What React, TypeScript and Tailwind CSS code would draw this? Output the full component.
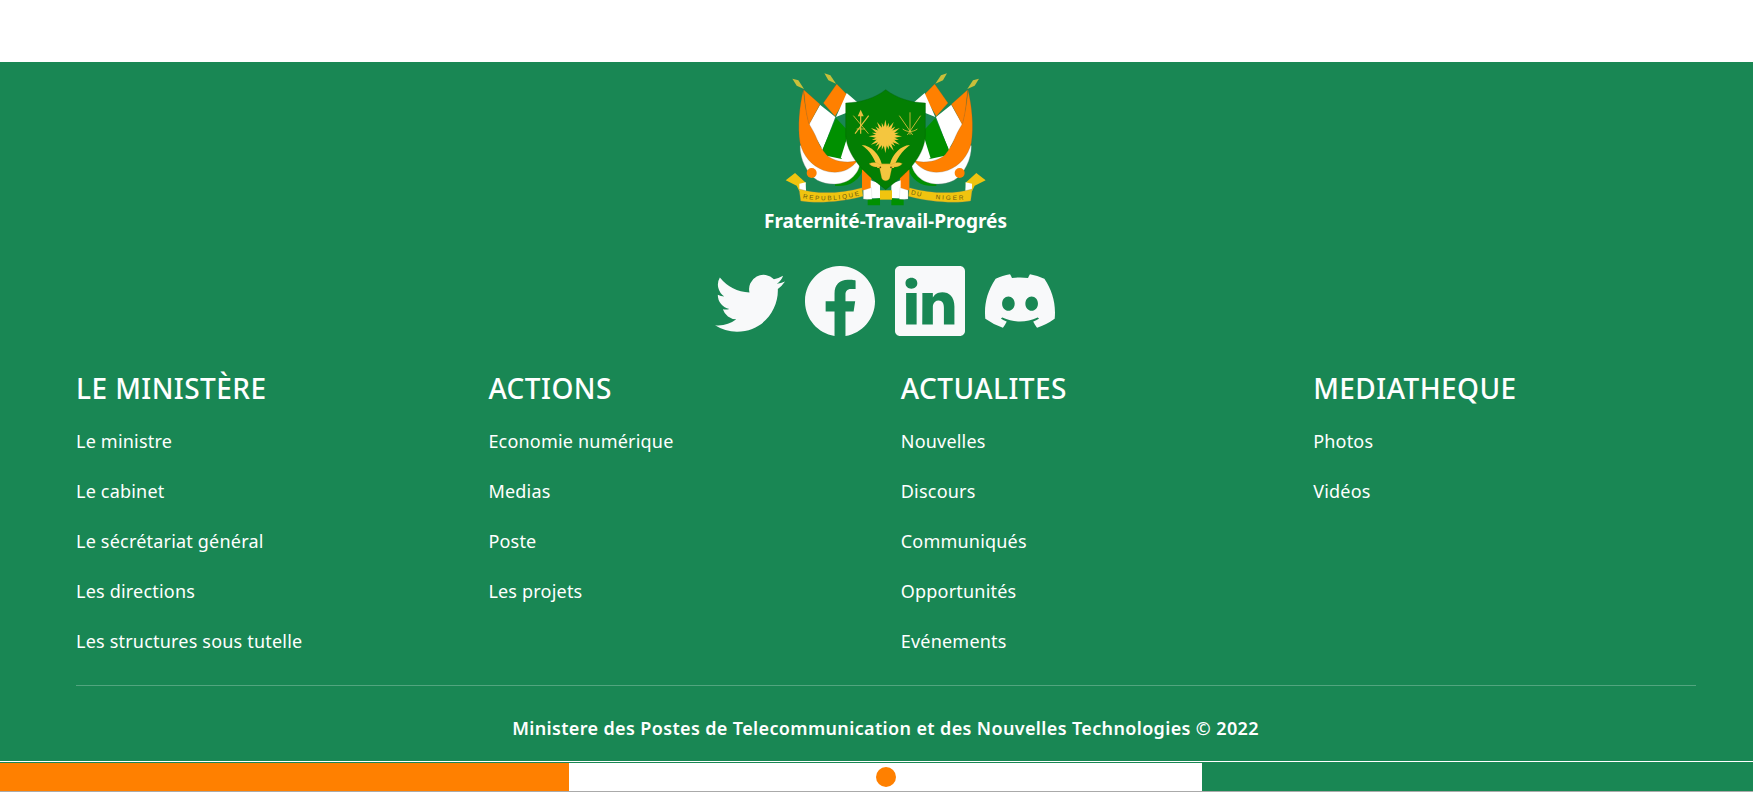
import { BsTwitter, BsFacebook, BsLinkedin, BsDiscord } from "react-icons/bs";

const columns = [
  { title: "LE MINISTÈRE", links: ["Le ministre", "Le cabinet", "Le sécrétariat général", "Les directions", "Les structures sous tutelle"] },
  { title: "ACTIONS", links: ["Economie numérique", "Medias", "Poste", "Les projets"] },
  { title: "ACTUALITES", links: ["Nouvelles", "Discours", "Communiqués", "Opportunités", "Evénements"] },
  { title: "MEDIATHEQUE", links: ["Photos", "Vidéos"] },
];

const rays = Array.from({ length: 24 }, (_, i) => {
  const a = (i / 24) * Math.PI * 2;
  const r = i % 2 === 0 ? 50 : 42;
  const b = a + Math.PI / 2;
  const cx = 436, cy = 230;
  return `${cx + 10 * Math.cos(b)},${cy + 10 * Math.sin(b)} ${cx + r * Math.cos(a)},${cy + r * Math.sin(a)} ${cx - 10 * Math.cos(b)},${cy - 10 * Math.sin(b)}`;
});

function FlagSide() {
  return (
    <g>
      <polygon points="157,57 175,62 192,88 170,78" fill="#c9bf3a" />
      <polygon points="253,41 271,47 288,72 265,62" fill="#c9bf3a" />
      <path d="M285,379 C330,382 360,362 370,325 L358,300 C350,340 320,365 285,372 Z" fill="#009000" />
      <path d="M180,258 C180,300 200,340 232,362 C262,378 310,378 335,355 C350,342 360,325 360,306 L350,295 L200,250 Z" fill="#fff" stroke="#8a8a8a" strokeWidth="1" />
      <polygon points="240,135 286,172 248,270 205,197" fill="#fff" />
      <polygon points="290,73 323,107 285,170 250,130" fill="#ff8000" stroke="#8a5a20" strokeWidth="0.6" />
      <polygon points="320,100 352,128 318,130 318,160 288,172" fill="#fff" />
      <polygon points="288,175 325,215 305,298 245,285 248,268" fill="#009000" />
      <polygon points="322,232 342,296 302,296" fill="#fff" />
      <polygon points="191,90 240,134 206,197 198,160" fill="#ff8000" stroke="#8a5a20" strokeWidth="0.6" />
      <path d="M190,90 C178,140 172,200 180,250 C190,290 215,318 250,332 C285,344 325,340 353,302 C335,308 320,308 300,305 C280,300 262,292 255,280 C240,262 232,240 225,225 C215,205 208,195 206,190 C198,160 193,125 190,90 Z" fill="#ff8000" stroke="#6a5a40" strokeWidth="0.7" />
      <circle cx="215" cy="340" r="15" fill="#ff8000" />
      <polygon points="366,330 394,330 394,392 366,392" fill="#ff8000" />
      <polygon points="392,362 420,372 420,416 392,416" fill="#fff" />
      <polygon points="370,392 394,384 396,420 370,418" fill="#fff" stroke="#aaa" strokeWidth="0.6" />
      <polygon points="383,420 420,416 420,437 383,437" fill="#009000" />
      <polygon points="137,362 165,340 198,370 178,395 170,378" fill="#f0c40f" />
      <polygon points="178,372 197,368 198,395 178,394" fill="#fff" />
      <path d="M177,388 C230,404 300,402 366,384 L369,410 C300,428 230,432 182,424 Z" fill="#f0c40f" stroke="#777" strokeWidth="0.8" />
    </g>
  );
}

function Emblem() {
  return (
    <svg viewBox="135 40 605 400" width="201.7" height="133.3" className="block">
      <defs>
        <path id="rib-l" d="M188,416 C240,426 300,424 362,406" />
        <path id="rib-r" d="M512,404 C570,418 630,426 690,418" />
      </defs>
      <FlagSide />
      <g transform="translate(874,0) scale(-1,1)">
        <FlagSide />
      </g>
      <rect x="420" y="392" width="36" height="28" fill="#f0c40f" />
      <path d="M437,90 C470,115 510,128 556,130 L556,230 C550,300 490,350 437,390 C385,350 325,300 317,230 L317,130 C365,128 405,115 437,90 Z" fill="#037f03" stroke="#005f00" strokeWidth="1" />
      {rays.map((p, i) => (
        <polygon key={i} points={p} fill="#f4c63f" />
      ))}
      <circle cx="436" cy="230" r="25" fill="#f4c63f" />
      <g stroke="#e8c040" strokeWidth="2.5" fill="none">
        <path d="M362,165 L362,222" strokeWidth="3.5" />
        <path d="M340,168 L385,222" />
        <path d="M386,168 L345,222" strokeWidth="3.5" />
        <path d="M350,208 L375,208" />
        <path d="M510,158 L510,225" />
        <path d="M478,168 L518,226" />
        <path d="M542,168 L502,226" />
        <path d="M488,208 C500,218 520,218 532,208" />
      </g>
      <polygon points="362,150 371,170 353,170" fill="#e8c040" />
      <path d="M365,256 C395,258 418,285 425,312 L450,312 C458,285 480,258 510,256 C485,275 468,300 462,325 L412,325 C405,300 392,275 365,256 Z" fill="#f4c63f" />
      <path d="M387,312 C400,306 412,308 418,314 L456,314 C464,308 476,306 487,312 C478,322 466,322 456,322 L449,355 C445,366 429,366 425,355 L418,322 C408,322 396,322 387,312 Z" fill="#f4c63f" stroke="#b88a10" strokeWidth="0.7" />
      <circle cx="421" cy="323" r="2.5" fill="#5a4300" />
      <circle cx="453" cy="323" r="2.5" fill="#5a4300" />
      <text fontFamily="'Liberation Sans', sans-serif" fontSize="19" fill="#6b5a10">
        <textPath href="#rib-l" textLength="172">REPUBLIQUE</textPath>
      </text>
      <text fontFamily="'Liberation Sans', sans-serif" fontSize="19" fill="#6b5a10" letterSpacing="4">
        <textPath href="#rib-r">DU</textPath>
      </text>
      <text fontFamily="'Liberation Sans', sans-serif" fontSize="19" fill="#6b5a10" letterSpacing="6">
        <textPath href="#rib-r" startOffset="76">NIGER</textPath>
      </text>
    </svg>
  );
}

export default function App() {
  return (
    <div className="font-['Noto_Sans',sans-serif] bg-white h-[792px] overflow-hidden flex flex-col text-white">
      <div className="h-[62px] shrink-0" />
      <footer className="bg-[#198754] h-[699px] shrink-0 pl-[76px] pr-[57px] pt-[11px]">
        <div className="flex flex-col items-center pr-px">
          <Emblem />
          <p className="font-bold text-[19px] leading-[27px] mt-[2px]">Fraternité-Travail-Progrés</p>
          <div className="flex gap-[20px] mt-[31px] mr-px text-[#f8f9fa]">
            <BsTwitter size={70} />
            <BsFacebook size={70} />
            <BsLinkedin size={70} />
            <BsDiscord size={70} />
          </div>
        </div>
        <div className="grid grid-cols-[repeat(4,412.4px)] mt-[32px]">
          {columns.map((c) => (
            <div key={c.title}>
              <h4 className="text-[28px] leading-[40px] font-medium tracking-[0.45px]">{c.title}</h4>
              <ul className="mt-[20px] flex flex-col gap-[23px]">
                {c.links.map((l) => (
                  <li key={l} className="text-[18px] leading-[27px] tracking-[0.2px]">{l}</li>
                ))}
              </ul>
            </div>
          ))}
        </div>
        <div className="h-px bg-white/25 mt-[30px]" />
        <p className="text-center pr-px font-semibold text-[18px] leading-[27px] mt-[29px] tracking-[0.36px]">
          Ministere des Postes de Telecommunication et des Nouvelles Technologies © 2022
        </p>
      </footer>
      <div className="h-px shrink-0 bg-white" />
      <div className="h-px shrink-0 bg-[#198754]" />
      <div className="h-[28px] shrink-0 flex">
        <div className="w-[569px] bg-[#ff8000]" />
        <div className="w-[633px] bg-white flex items-center justify-center">
          <div className="w-5 h-5 rounded-full bg-[#ff8000]" />
        </div>
        <div className="flex-1 bg-[#198754]" />
      </div>
      <div className="h-px bg-[#aaaaaa] shrink-0" />
    </div>
  );
}
